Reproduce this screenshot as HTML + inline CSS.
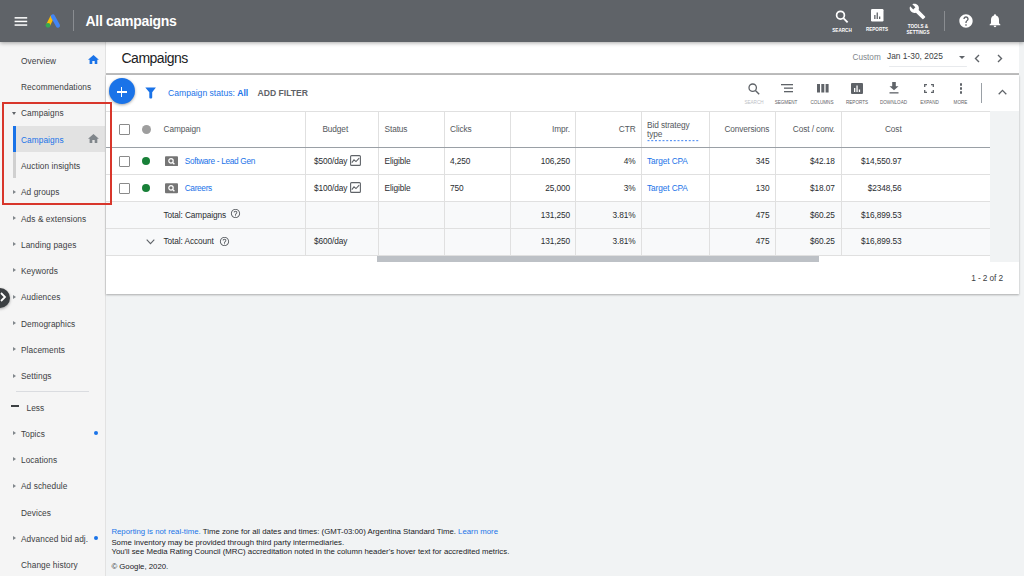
<!DOCTYPE html>
<html><head><meta charset="utf-8">
<style>
*{margin:0;padding:0;box-sizing:border-box}
html,body{width:1024px;height:576px;overflow:hidden;background:#f1f3f4;font-family:"Liberation Sans",sans-serif;color:#3c4043}
.a{position:absolute}
.t{position:absolute;line-height:1;white-space:nowrap}
#hdr{left:0;top:0;width:1024px;height:42px;background:#5f6368;box-shadow:0 1px 4px rgba(0,0,0,.35);z-index:5}
#side{left:0;top:42px;width:106px;height:534px;background:#f5f5f5;border-right:1px solid #e2e2e2}
#titlebar{left:106px;top:42px;width:913px;height:33px;background:#fff;border-bottom:2px solid #bdbdbd}
#card{left:106px;top:75px;width:913px;height:219px;background:#fff;box-shadow:0 1px 2px rgba(0,0,0,.3)}
.si{font-size:8.3px;letter-spacing:0.07px;color:#3c4043}
.tri{position:absolute;width:0;height:0;border-top:2px solid transparent;border-bottom:2px solid transparent;border-left:3px solid #80868b}
.lbl{font-size:4.6px;color:#fff;font-weight:bold;text-align:center}
.tl{font-size:4.6px;color:#5f6368;text-align:center}
.th{font-size:8.3px;letter-spacing:-0.1px;color:#54585d}
.td{font-size:8.3px;letter-spacing:-0.1px;color:#2a2d30}
.lk{color:#1a73e8}
.vl{position:absolute;top:111px;width:1px;height:144px;background:#e0e0e0}
.hl{position:absolute;left:106px;width:884px;height:1px;background:#e0e0e0}
.cb{position:absolute;width:11px;height:11px;border:1.5px solid #8a8a8a;border-radius:1px}
.r{text-align:right}
</style></head><body>
<!-- header -->
<div id="hdr" class="a">
  <svg class="a" style="left:14px;top:16px" width="14" height="11" viewBox="0 0 14 11"><rect x="0.6" y="1.1" width="12.6" height="1.5" fill="#fff"/><rect x="0.6" y="4.7" width="12.6" height="1.5" fill="#fff"/><rect x="0.6" y="8.3" width="12.6" height="1.5" fill="#fff"/></svg>
  <svg class="a" style="left:40px;top:10px" width="30" height="22" viewBox="0 0 30 22">
    <line x1="8.2" y1="15" x2="12" y2="7.3" stroke="#fbbc04" stroke-width="4" stroke-linecap="round"/>
    <line x1="12.9" y1="6.4" x2="17.9" y2="15.6" stroke="#4285f4" stroke-width="4.2" stroke-linecap="round"/>
    <circle cx="8" cy="15.3" r="2.4" fill="#34a853"/>
  </svg>
  <div class="a" style="left:73px;top:10px;width:1.2px;height:21px;background:#8a8d91"></div>
  <div class="t" style="left:85.5px;top:14.4px;font-size:14px;letter-spacing:-0.3px;font-weight:bold;color:#fff">All campaigns</div>
  <!-- search -->
  <svg class="a" style="left:835px;top:10px" width="14" height="13" viewBox="0 0 14 13"><circle cx="5.5" cy="5.2" r="3.9" fill="none" stroke="#fff" stroke-width="1.7"/><line x1="8.4" y1="8.1" x2="12.6" y2="12.3" stroke="#fff" stroke-width="1.8"/></svg>
  <div class="t lbl" style="left:826px;top:28.5px;width:32px">SEARCH</div>
  <svg class="a" style="left:871px;top:9px" width="13" height="13" viewBox="0 0 13 13"><rect x="0" y="0" width="12.5" height="12.5" rx="1.2" fill="#fff"/><rect x="3.2" y="6" width="1.3" height="4" fill="#5f6368"/><rect x="5.6" y="3.5" width="1.3" height="6.5" fill="#5f6368"/><rect x="8" y="7.5" width="1.3" height="2.5" fill="#5f6368"/></svg>
  <div class="t lbl" style="left:861px;top:27.5px;width:32px">REPORTS</div>
  <svg class="a" style="left:909px;top:3px" width="17" height="17" viewBox="0 0 24 24"><path fill="#fff" d="M22.7 19l-9.1-9.1c.9-2.3.4-5-1.5-6.9-2-2-5-2.4-7.4-1.3L9 6 6 9 1.6 4.7C.4 7.1.9 10.1 2.9 12.1c1.9 1.9 4.6 2.400 6.900 1.500l9.1 9.1c.4.4 1 .4 1.400 0l2.300-2.300c.5-.4.5-1.1.1-1.400z"/></svg>
  <div class="t lbl" style="left:902px;top:23.5px;width:32px;line-height:6.2px">TOOLS &amp;<br>SETTINGS</div>
  <div class="a" style="left:944px;top:11px;width:1px;height:20px;background:#8a8d91"></div>
  <svg class="a" style="left:958px;top:13px" width="16" height="16" viewBox="0 0 24 24"><path fill="#fff" d="M12 2C6.48 2 2 6.48 2 12s4.48 10 10 10 10-4.480 10-10S17.52 2 12 2zm1 17h-2v-2h2v2zm2.07-7.750l-.9.920C13.450 12.900 13 13.500 13 15h-2v-.5c0-1.100.45-2.100 1.170-2.830l1.240-1.260c.370-.360.590-.860.590-1.410 0-1.100-.9-2-2-2s-2 .9-2 2H8c0-2.210 1.790-4 4-4s4 1.790 4 4c0 .880-.360 1.680-.930 2.250z"/></svg>
  <svg class="a" style="left:987px;top:12px" width="16" height="17" viewBox="0 0 24 24"><path fill="#fff" d="M12 22c1.100 0 2-.9 2-2h-4c0 1.100.89 2 2 2zm6-6v-5c0-3.070-1.640-5.640-4.500-6.320V4c0-.830-.670-1.500-1.500-1.500s-1.500.670-1.500 1.500v.680C7.630 5.360 6 7.920 6 11v5l-2 2v1h16v-1l-2-2z"/></svg>
</div>

<!-- sidebar -->
<div id="side" class="a"></div>
<div class="t si" style="left:21px;top:56.7px">Overview</div>
<div class="t si" style="left:21px;top:83.0px">Recommendations</div>
<div class="t si" style="left:21px;top:109.3px">Campaigns</div>
<div class="a" style="left:16px;top:126px;width:89px;height:26px;background:#e2e2e2"></div>
<div class="a" style="left:13px;top:126px;width:3px;height:26px;background:#1a73e8"></div>
<div class="a" style="left:13px;top:152px;width:3px;height:26px;background:#d0d0d0"></div>
<div class="t si lk" style="left:21px;top:135.6px">Campaigns</div>
<div class="t si" style="left:21px;top:161.9px">Auction insights</div>
<div class="t si" style="left:21px;top:188.2px">Ad groups</div>
<div class="t si" style="left:21px;top:214.5px">Ads &amp; extensions</div>
<div class="t si" style="left:21px;top:240.8px">Landing pages</div>
<div class="t si" style="left:21px;top:267.1px">Keywords</div>
<div class="t si" style="left:21px;top:293.4px">Audiences</div>
<div class="t si" style="left:21px;top:319.7px">Demographics</div>
<div class="t si" style="left:21px;top:346.0px">Placements</div>
<div class="t si" style="left:21px;top:372.3px">Settings</div>
<div class="a" style="left:16px;top:391px;width:73px;height:1px;background:#dadce0"></div>
<div class="a" style="left:11px;top:405px;width:8px;height:2px;background:#3c4043"></div>
<div class="t si" style="left:26.5px;top:403.5px">Less</div>
<div class="t si" style="left:21px;top:429.8px">Topics</div>
<div class="t si" style="left:21px;top:456.1px">Locations</div>
<div class="t si" style="left:21px;top:482.4px">Ad schedule</div>
<div class="t si" style="left:21px;top:508.7px">Devices</div>
<div class="t si" style="left:21px;top:535.0px">Advanced bid adj.</div>
<div class="t si" style="left:21px;top:561.3px">Change history</div>
<div class="tri" style="left:13px;top:215.6px"></div>
<div class="tri" style="left:13px;top:242.1px"></div>
<div class="tri" style="left:13px;top:268.1px"></div>
<div class="tri" style="left:13px;top:294.6px"></div>
<div class="tri" style="left:13px;top:320.6px"></div>
<div class="tri" style="left:13px;top:347.1px"></div>
<div class="tri" style="left:13px;top:373.6px"></div>
<div class="tri" style="left:13px;top:189.6px"></div>
<div class="tri" style="left:13px;top:431.1px"></div>
<div class="tri" style="left:13px;top:457.1px"></div>
<div class="tri" style="left:13px;top:483.6px"></div>
<div class="tri" style="left:13px;top:536.1px"></div>
<div class="a" style="left:12px;top:112px;width:0;height:0;border-left:2.5px solid transparent;border-right:2.5px solid transparent;border-top:3px solid #5f6368"></div>
<svg class="a" style="left:88px;top:55px" width="11" height="9" viewBox="0 0 11 9"><path fill="#1a73e8" d="M4.3 9V6h2.400v3h2.600V4.800h1.600L5.500 0 0 4.800h1.600V9z"/></svg>
<svg class="a" style="left:88px;top:134px" width="11" height="9" viewBox="0 0 11 9"><path fill="#80868b" d="M4.3 9V6h2.400v3h2.600V4.800h1.600L5.500 0 0 4.800h1.600V9z"/></svg>
<div class="a" style="left:93.5px;top:431.2px;width:4px;height:4px;border-radius:50%;background:#1a73e8"></div>
<div class="a" style="left:93.5px;top:536.4px;width:4px;height:4px;border-radius:50%;background:#1a73e8"></div>
<div class="a" style="left:-10px;top:288px;width:20px;height:20px;border-radius:50%;background:#3c4043;box-shadow:0 1px 3px rgba(0,0,0,.35)"></div>
<svg class="a" style="left:0;top:292px" width="8" height="10" viewBox="0 0 8 10"><path d="M1 1l4 4-4 4" fill="none" stroke="#fff" stroke-width="1.8"/></svg>

<!-- title bar -->
<div id="titlebar" class="a"></div>
<div class="t" style="left:121.5px;top:50.9px;font-size:14px;letter-spacing:-0.5px;color:#202124">Campaigns</div>
<div class="t" style="left:852.5px;top:53.8px;font-size:8.2px;color:#80868b">Custom</div>
<div class="t" style="left:887px;top:52.1px;font-size:8.4px;color:#3c4043">Jan 1-30, 2025</div>
<div class="a" style="left:959px;top:55.5px;width:0;height:0;border-left:3px solid transparent;border-right:3px solid transparent;border-top:3px solid #5f6368"></div>
<div class="a" style="left:889px;top:65.5px;width:78px;height:1px;background:#e8eaed;border-radius:1px"></div>
<svg class="a" style="left:973px;top:54px" width="8" height="9" viewBox="0 0 8 9"><path d="M6 1L2.500 4.500 6 8" fill="none" stroke="#5f6368" stroke-width="1.4"/></svg>
<svg class="a" style="left:996px;top:54px" width="8" height="9" viewBox="0 0 8 9"><path d="M2 1l3.500 3.500L2 8" fill="none" stroke="#5f6368" stroke-width="1.4"/></svg>

<!-- card -->
<div id="card" class="a"></div>
<div class="a" style="left:990px;top:111px;width:29px;height:151px;background:#f1f3f4"></div>

<!-- toolbar -->
<div class="a" style="left:109px;top:78.4px;width:26px;height:26px;border-radius:50%;background:#1a73e8;box-shadow:0 1px 3px rgba(0,0,0,.35)"></div>
<div class="a" style="left:120.9px;top:86.9px;width:1.4px;height:10px;background:#fff"></div>
<div class="a" style="left:116.6px;top:91.2px;width:10px;height:1.4px;background:#fff"></div>
<svg class="a" style="left:144.5px;top:86.5px" width="12" height="12" viewBox="0 0 12 12"><path fill="#1a73e8" d="M0.300 0.500h10.600L7.200 5.300V10.600Q7.200 11.600 6.200 11.600H5.200Q4.300 11.600 4.300 10.600V5.300z"/></svg>
<div class="t" style="left:168px;top:88.8px;font-size:8.6px;color:#1a73e8">Campaign status: <b>All</b></div>
<div class="t" style="left:257.5px;top:88.8px;font-size:8.6px;color:#5f6368;font-weight:bold">ADD FILTER</div>
<svg class="a" style="left:748px;top:83px" width="12" height="12" viewBox="0 0 12 12"><circle cx="4.700" cy="4.700" r="3.700" fill="none" stroke="#5f6368" stroke-width="1.3"/><line x1="7.400" y1="7.400" x2="11.200" y2="11.200" stroke="#5f6368" stroke-width="1.4"/></svg>
<div class="t tl" style="left:739px;top:100.5px;width:30px;color:#bdc1c6">SEARCH</div>
<svg class="a" style="left:780.5px;top:84px" width="13" height="9" viewBox="0 0 13 9"><rect x="0" y="0" width="12" height="1.3" fill="#5f6368"/><rect x="3" y="3.500" width="9" height="1.3" fill="#5f6368"/><rect x="3" y="7" width="9" height="1.3" fill="#5f6368"/></svg>
<div class="t tl" style="left:771px;top:100.5px;width:30px">SEGMENT</div>
<svg class="a" style="left:816.5px;top:83.5px" width="12" height="9" viewBox="0 0 12 9"><rect x="0" y="0" width="3" height="8.500" fill="#5f6368"/><rect x="4.300" y="0" width="3" height="8.500" fill="#5f6368"/><rect x="8.600" y="0" width="3" height="8.500" fill="#5f6368"/></svg>
<div class="t tl" style="left:807px;top:100.5px;width:30px">COLUMNS</div>
<svg class="a" style="left:851px;top:82.5px" width="12" height="12" viewBox="0 0 12 12"><rect x="0" y="0" width="12" height="11" rx="1" fill="#5f6368"/><rect x="3" y="5" width="1.300" height="4" fill="#fff"/><rect x="5.400" y="2.500" width="1.300" height="6.500" fill="#fff"/><rect x="7.800" y="6.500" width="1.300" height="2.500" fill="#fff"/></svg>
<div class="t tl" style="left:842px;top:100.5px;width:30px">REPORTS</div>
<svg class="a" style="left:889px;top:82px" width="10" height="12" viewBox="0 0 10 12"><path fill="#5f6368" d="M3.200 0h3.600v4.200H9.500L5 8.200 0.500 4.200h2.700z"/><rect x="0.500" y="10.200" width="9" height="1.300" fill="#5f6368"/></svg>
<div class="t tl" style="left:878.5px;top:100.5px;width:30px">DOWNLOAD</div>
<svg class="a" style="left:924px;top:83.5px" width="10" height="9" viewBox="0 0 10 9"><path d="M0.700 3V0.700H3M7 0.700h2.300V3M9.300 6v2.300H7M3 8.300H0.700V6" fill="none" stroke="#5f6368" stroke-width="1.300"/></svg>
<div class="t tl" style="left:914.5px;top:100.5px;width:30px">EXPAND</div>
<div class="a" style="left:959.5px;top:83.3px;width:2.600px;height:2.600px;border-radius:50%;background:#5f6368"></div>
<div class="a" style="left:959.5px;top:87.2px;width:2.600px;height:2.600px;border-radius:50%;background:#5f6368"></div>
<div class="a" style="left:959.5px;top:91.1px;width:2.600px;height:2.600px;border-radius:50%;background:#5f6368"></div>
<div class="t tl" style="left:945.5px;top:100.5px;width:30px">MORE</div>
<div class="a" style="left:981px;top:82.5px;width:1px;height:20.500px;background:#9aa0a6"></div>
<svg class="a" style="left:998.3px;top:88.9px" width="9" height="6" viewBox="0 0 9 6"><path d="M0.700 5.300L4.500 1.400 8.300 5.300" fill="none" stroke="#5f6368" stroke-width="1.300"/></svg>

<!--TABLE-->
<div class="a" style="left:106px;top:201px;width:884px;height:54px;background:#f8f9fa"></div>
<div class="hl" style="top:111px"></div>
<div class="hl" style="top:174px"></div>
<div class="hl" style="top:201px"></div>
<div class="hl" style="top:228px"></div>
<div class="hl" style="top:255px"></div>
<div class="vl" style="left:305px"></div>
<div class="vl" style="left:378px"></div>
<div class="vl" style="left:444px"></div>
<div class="vl" style="left:510px"></div>
<div class="vl" style="left:575px"></div>
<div class="vl" style="left:641px"></div>
<div class="vl" style="left:709px"></div>
<div class="vl" style="left:774.5px"></div>
<div class="vl" style="left:840.5px"></div>
<div class="a" style="left:106px;top:147px;width:884px;height:1px;background:#9aa0a6"></div>
<div class="cb" style="left:119px;top:123.5px"></div>
<div class="a" style="left:142px;top:125px;width:9px;height:9px;border-radius:50%;background:#9e9e9e"></div>
<div class="t th" style="left:163.5px;top:124.87px">Campaign</div>
<div class="t th" style="left:322.4px;top:124.87px">Budget</div>
<div class="t th" style="left:384.5px;top:124.87px">Status</div>
<div class="t th" style="left:450px;top:124.87px">Clicks</div>
<div class="t th" style="right:454px;top:124.87px">Impr.</div>
<div class="t th" style="right:388.4px;top:124.87px">CTR</div>
<div class="t th" style="left:647px;top:120.77px">Bid strategy</div>
<div class="t th" style="left:647px;top:130.17px">type</div>
<svg class="a" style="left:647px;top:140px" width="54" height="2" viewBox="0 0 54 2"><rect x="0.50" y="0" width="2" height="1.2" fill="#5e97f6"/><rect x="4.25" y="0" width="2" height="1.2" fill="#5e97f6"/><rect x="8.00" y="0" width="2" height="1.2" fill="#5e97f6"/><rect x="11.75" y="0" width="2" height="1.2" fill="#5e97f6"/><rect x="15.50" y="0" width="2" height="1.2" fill="#5e97f6"/><rect x="19.25" y="0" width="2" height="1.2" fill="#5e97f6"/><rect x="23.00" y="0" width="2" height="1.2" fill="#5e97f6"/><rect x="26.75" y="0" width="2" height="1.2" fill="#5e97f6"/><rect x="30.50" y="0" width="2" height="1.2" fill="#5e97f6"/><rect x="34.25" y="0" width="2" height="1.2" fill="#5e97f6"/><rect x="38.00" y="0" width="2" height="1.2" fill="#5e97f6"/><rect x="41.75" y="0" width="2" height="1.2" fill="#5e97f6"/><rect x="45.50" y="0" width="2" height="1.2" fill="#5e97f6"/><rect x="49.25" y="0" width="2" height="1.2" fill="#5e97f6"/></svg>
<div class="t th" style="right:254.6px;top:124.87px">Conversions</div>
<div class="t th" style="right:189.2px;top:124.87px">Cost / conv.</div>
<div class="t th" style="right:122.4px;top:124.87px">Cost</div>
<div class="cb" style="left:119px;top:155.7px"></div>
<div class="a" style="left:142.2px;top:156.7px;width:8px;height:8px;border-radius:50%;background:#188038"></div>
<svg class="a" style="left:164.7px;top:155.89999999999998px" width="13" height="10.5" viewBox="0 0 13 10"><rect width="13" height="10" rx="1" fill="#757575"/><circle cx="6" cy="4.6" r="2.2" fill="none" stroke="#fff" stroke-width="1.2"/><line x1="7.6" y1="6.2" x2="9.4" y2="8" stroke="#fff" stroke-width="1.3"/></svg>
<div class="t td lk" style="left:184.7px;top:156.67px;letter-spacing:-0.33px">Software - Lead Gen</div>
<div class="t td" style="left:313.9px;top:156.67px">$500/day</div>
<svg class="a" style="left:349.8px;top:155.2px" width="11" height="11" viewBox="0 0 11 11"><rect x="0.6" y="0.6" width="9.8" height="9.8" rx="1" fill="none" stroke="#5f6368" stroke-width="1.1"/><path d="M1.800 7.600L4 4.800l2 1.800 3.200-3.400" fill="none" stroke="#5f6368" stroke-width="1.1"/></svg>
<div class="t td" style="left:384.5px;top:156.67px">Eligible</div>
<div class="t td" style="left:450px;top:156.67px">4,250</div>
<div class="t td" style="right:454px;top:156.67px">106,250</div>
<div class="t td" style="right:388.4px;top:156.67px">4%</div>
<div class="t td lk" style="left:647px;top:156.67px">Target CPA</div>
<div class="t td" style="right:254.6px;top:156.67px">345</div>
<div class="t td" style="right:189.2px;top:156.67px">$42.18</div>
<div class="t td" style="right:122.4px;top:156.67px">$14,550.97</div>
<div class="cb" style="left:119px;top:182.9px"></div>
<div class="a" style="left:142.2px;top:183.9px;width:8px;height:8px;border-radius:50%;background:#188038"></div>
<svg class="a" style="left:164.7px;top:183.1px" width="13" height="10.5" viewBox="0 0 13 10"><rect width="13" height="10" rx="1" fill="#757575"/><circle cx="6" cy="4.6" r="2.2" fill="none" stroke="#fff" stroke-width="1.2"/><line x1="7.6" y1="6.2" x2="9.4" y2="8" stroke="#fff" stroke-width="1.3"/></svg>
<div class="t td lk" style="left:184.7px;top:183.87px;letter-spacing:-0.33px">Careers</div>
<div class="t td" style="left:313.9px;top:183.87px">$100/day</div>
<svg class="a" style="left:349.8px;top:182.4px" width="11" height="11" viewBox="0 0 11 11"><rect x="0.6" y="0.6" width="9.8" height="9.8" rx="1" fill="none" stroke="#5f6368" stroke-width="1.1"/><path d="M1.800 7.600L4 4.800l2 1.800 3.200-3.400" fill="none" stroke="#5f6368" stroke-width="1.1"/></svg>
<div class="t td" style="left:384.5px;top:183.87px">Eligible</div>
<div class="t td" style="left:450px;top:183.87px">750</div>
<div class="t td" style="right:454px;top:183.87px">25,000</div>
<div class="t td" style="right:388.4px;top:183.87px">3%</div>
<div class="t td lk" style="left:647px;top:183.87px">Target CPA</div>
<div class="t td" style="right:254.6px;top:183.87px">130</div>
<div class="t td" style="right:189.2px;top:183.87px">$18.07</div>
<div class="t td" style="right:122.4px;top:183.87px">$2348,56</div>
<div class="t td" style="left:163.5px;top:210.87px">Total: Campaigns</div>
<svg class="a" style="left:229.6px;top:208.4px" width="11" height="11" viewBox="0 0 24 24"><path fill="#5f6368" d="M11 18h2v-2h-2v2zm1-16C6.480 2 2 6.480 2 12s4.480 10 10 10 10-4.480 10-10S17.520 2 12 2zm0 18c-4.410 0-8-3.590-8-8s3.590-8 8-8 8 3.590 8 8-3.590 8-8 8zm0-14c-2.210 0-4 1.790-4 4h2c0-1.100.9-2 2-2s2 .9 2 2c0 2-3 1.750-3 5h2c0-2.250 3-2.500 3-5 0-2.210-1.790-4-4-4z"/></svg>
<div class="t td" style="right:454px;top:210.87px">131,250</div>
<div class="t td" style="right:388.4px;top:210.87px">3.81%</div>
<div class="t td" style="right:254.6px;top:210.87px">475</div>
<div class="t td" style="right:189.2px;top:210.87px">$60.25</div>
<div class="t td" style="right:122.4px;top:210.87px">$16,899.53</div>
<svg class="a" style="left:146px;top:238.5px" width="9" height="6" viewBox="0 0 9 6"><path d="M0.700 0.700L4.500 4.600 8.300 0.700" fill="none" stroke="#5f6368" stroke-width="1.1"/></svg>
<div class="t td" style="left:163.5px;top:237.37px">Total: Account</div>
<svg class="a" style="left:219px;top:235.6px" width="11" height="11" viewBox="0 0 24 24"><path fill="#5f6368" d="M11 18h2v-2h-2v2zm1-16C6.480 2 2 6.480 2 12s4.480 10 10 10 10-4.480 10-10S17.520 2 12 2zm0 18c-4.410 0-8-3.590-8-8s3.590-8 8-8 8 3.590 8 8-3.590 8-8 8zm0-14c-2.210 0-4 1.790-4 4h2c0-1.100.9-2 2-2s2 .9 2 2c0 2-3 1.750-3 5h2c0-2.250 3-2.500 3-5 0-2.210-1.790-4-4-4z"/></svg>
<div class="t td" style="left:313.9px;top:237.37px">$600/day</div>
<div class="t td" style="right:454px;top:237.37px">131,250</div>
<div class="t td" style="right:388.4px;top:237.37px">3.81%</div>
<div class="t td" style="right:254.6px;top:237.37px">475</div>
<div class="t td" style="right:189.2px;top:237.37px">$60.25</div>
<div class="t td" style="right:122.4px;top:237.37px">$16,899.53</div>
<div class="a" style="left:377px;top:256px;width:442px;height:6px;background:#bdc1c6"></div>
<div class="t td" style="right:21px;top:274.22px;font-size:8.3px;color:#3c4043">1 - 2 of 2</div>

<!--/TABLE-->

<!-- footer -->
<div class="t" style="left:111.4px;top:528.4px;font-size:7.8px;color:#202124"><span class="lk">Reporting is not real-time.</span> Time zone for all dates and times: (GMT-03:00) Argentina Standard Time. <span class="lk">Learn more</span></div>
<div class="t" style="left:111.4px;top:538.6px;font-size:7.8px;color:#202124">Some inventory may be provided through third party intermediaries.</div>
<div class="t" style="left:111.4px;top:548px;font-size:7.8px;color:#202124">You'll see Media Rating Council (MRC) accreditation noted in the column header's hover text for accredited metrics.</div>
<div class="t" style="left:111.4px;top:563.4px;font-size:7.8px;color:#202124">&copy; Google, 2020.</div>
<!-- red box -->
<div class="a" style="left:2px;top:102.3px;width:110px;height:102.4px;border:2px solid #d8362b;z-index:10"></div>
</body></html>
